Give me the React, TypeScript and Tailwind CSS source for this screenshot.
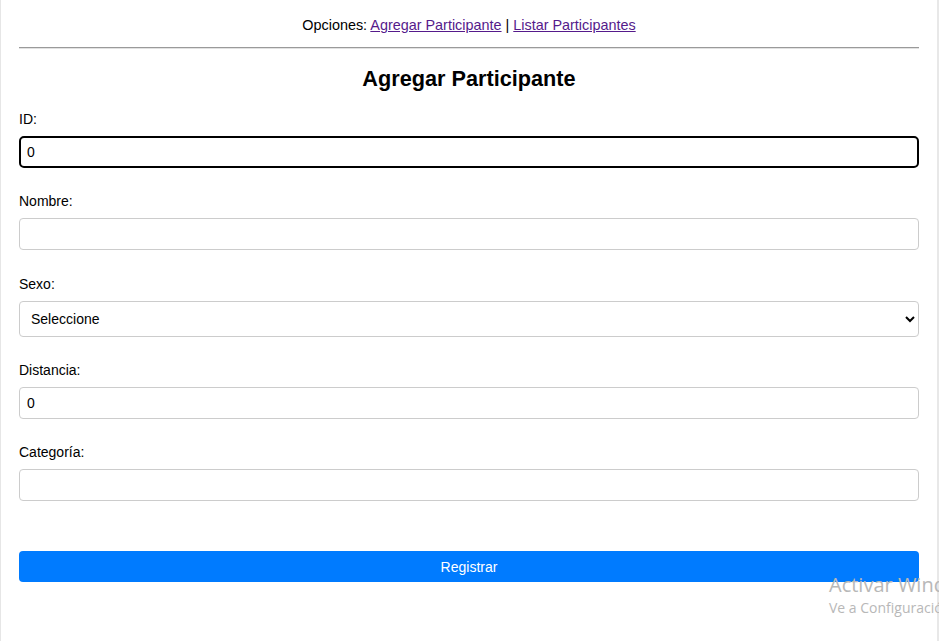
import { useState } from 'react'

const inputBase =
  'block w-full h-8 px-[7px] text-sm text-black bg-white rounded border border-[#cccccc] outline-none'

export default function App() {
  const [form, setForm] = useState({
    id: '0',
    nombre: '',
    sexo: '',
    distancia: '0',
    categoria: '',
  })

  const set = (key: keyof typeof form) => (e: { target: { value: string } }) =>
    setForm({ ...form, [key]: e.target.value })

  return (
    <div
      className="relative flex h-[641px] w-full overflow-hidden bg-white text-black"
      style={{ fontFamily: '"Liberation Sans", Arial, sans-serif' }}
    >
      <div className="w-px shrink-0 bg-[#e6e6e6]" />

      <div className="flex-1">
        <div className="mx-auto w-[900px]">
          <nav className="pt-[17px] text-center text-[14.4px] leading-4">
            Opciones:{' '}
            <a href="#" className="text-[#551a8b] underline">
              Agregar Participante
            </a>{' '}
            |{' '}
            <a href="#" className="text-[#551a8b] underline">
              Listar Participantes
            </a>
          </nav>

          <hr className="mt-[14px] border-t border-b border-t-[#9a9a9a] border-b-[#e2e2e2]" />

          <h2 className="mt-[18px] text-center text-[21.7px] font-bold leading-6">
            Agregar Participante
          </h2>

          <form className="mt-5" onSubmit={(e) => e.preventDefault()}>
            <label className="block text-sm leading-4">ID:</label>
            <input
              value={form.id}
              onChange={set('id')}
              className="mt-[9px] block h-8 w-full rounded-[5px] border-2 border-black bg-white px-[6px] text-sm outline-none"
            />

            <label className="mt-[25px] block text-sm leading-4">Nombre:</label>
            <input value={form.nombre} onChange={set('nombre')} className={`mt-[9px] ${inputBase}`} />

            <label className="mt-[26px] block text-sm leading-4">Sexo:</label>
            <select
              value={form.sexo}
              onChange={set('sexo')}
              className="mt-[9px] block h-9 w-full rounded border border-[#cccccc] bg-white pl-[7px] pr-1 text-sm text-black outline-none"
            >
              <option value="">Seleccione</option>
              <option value="M">Masculino</option>
              <option value="F">Femenino</option>
            </select>

            <label className="mt-[25px] block text-sm leading-4">Distancia:</label>
            <input value={form.distancia} onChange={set('distancia')} className={`mt-[9px] ${inputBase}`} />

            <label className="mt-[25px] block text-sm leading-4">Categoría:</label>
            <input value={form.categoria} onChange={set('categoria')} className={`mt-[9px] ${inputBase}`} />

            <button
              type="submit"
              className="mt-[50px] block h-[31px] w-full rounded bg-[#007bff] text-sm text-white"
            >
              Registrar
            </button>
          </form>
        </div>
      </div>

      <div className="w-[2px] shrink-0 bg-[#e8e8e8]" />

      <div
        className="pointer-events-none absolute left-[829px] top-[573px] whitespace-nowrap text-[#b8b8b8]"
        style={{ fontFamily: '"Open Sans", "Noto Sans", sans-serif' }}
      >
        <div className="text-[20px] leading-6">Activar Windows</div>
        <div className="mt-[3px] text-[14px] leading-4">Ve a Configuración para activar Windows.</div>
      </div>
    </div>
  )
}
